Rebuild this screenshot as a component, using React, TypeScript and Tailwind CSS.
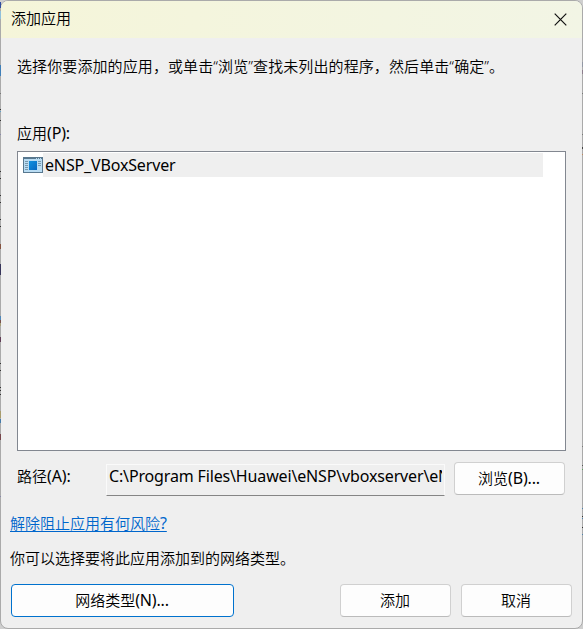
import React from 'react';

interface DialogButtonProps {
  label: string;
  suffix?: string;
  className: string;
  primary?: boolean;
}

// Bits of the desktop that show through the translucent window edge
const leftMarks = [
  { top: 2, height: 6, color: '#2f4ea0' },
  { top: 11, height: 8, color: '#8fc0dc' },
  { top: 65, height: 11, color: '#3f7fb8' },
  { top: 93, height: 1, color: '#777777' },
  { top: 109, height: 1, color: '#333333' },
  { top: 111, height: 1, color: '#5fa0c8' },
  { top: 120, height: 1, color: '#333333' },
  { top: 134, height: 1, color: '#8888aa' },
  { top: 171, height: 1, color: '#333333' },
  { top: 178, height: 1, color: '#333333' },
  { top: 195, height: 1, color: '#333333' },
  { top: 202, height: 1, color: '#333333' },
  { top: 219, height: 1, color: '#333333' },
  { top: 226, height: 1, color: '#333333' },
  { top: 244, height: 5, color: '#84523f' },
  { top: 264, height: 11, color: '#37355a' },
  { top: 316, height: 4, color: '#4f86b8' },
  { top: 320, height: 3, color: '#76504c' },
  { top: 323, height: 3, color: '#a59e78' },
  { top: 337, height: 5, color: '#603c55' },
  { top: 363, height: 1, color: '#333333' },
  { top: 370, height: 1, color: '#333333' },
  { top: 387, height: 1, color: '#333333' },
  { top: 390, height: 1, color: '#333333' },
  { top: 394, height: 1, color: '#333333' },
  { top: 411, height: 7, color: '#a89c6c' },
  { top: 419, height: 4, color: '#447baa' },
  { top: 434, height: 6, color: '#76464b' },
  { top: 496, height: 1, color: '#8888aa' },
];

const rightMarks = [
  { top: 62, height: 5, color: '#9297a4' },
  { top: 70, height: 4, color: '#8d7e8d' },
  { top: 93, height: 1, color: '#777777' },
  { top: 134, height: 1, color: '#777777' },
  { top: 147, height: 2, color: '#444444' },
  { top: 154, height: 1, color: '#c0885e' },
  { top: 446, height: 1, color: '#777777' },
  { top: 465, height: 1, color: '#555555' },
  { top: 469, height: 1, color: '#5a9a5a' },
  { top: 508, height: 1, color: '#4d82ad' },
  { top: 516, height: 1, color: '#333333' },
  { top: 518, height: 1, color: '#4d82ad' },
  { top: 527, height: 1, color: '#333333' },
  { top: 534, height: 1, color: '#4d82ad' },
];

// Latin letters need the regular weight to balance the lighter Chinese text
function Latin({ children }: { children: React.ReactNode }) {
  return <span className="text-[16px] leading-none font-normal tracking-[-0.15px]">{children}</span>;
}

function DialogButton({ label, suffix, className, primary = false }: DialogButtonProps) {
  const border = primary ? 'border-[#0072ce]' : 'border-[#d0d0d0] border-b-[#bbbbbb]';

  return (
    <button
      className={`h-[33px] shrink-0 rounded-[4px] border bg-[#fdfdfd] pr-px pb-[2px] ${border} ${className}`}
    >
      {label}
      {suffix && <Latin>{suffix}</Latin>}
    </button>
  );
}

function AppIcon() {
  return (
    <svg width="20" height="16" viewBox="0 0 20 16" shapeRendering="crispEdges" className="shrink-0">
      <defs>
        <linearGradient id="pane" x1="0" y1="0" x2="1" y2="1">
          <stop offset="0" stopColor="#1192e0" />
          <stop offset="1" stopColor="#0868c0" />
        </linearGradient>
      </defs>
      <rect width="20" height="16" fill="#58788f" />
      <rect x="1" y="2" width="18" height="13" fill="#b9dcf3" />
      <path d="M13 1h1v1h-1zM15 1h1v1h-1zM17 1h1v1h-1z" fill="#b9dcf3" />
      <rect x="6" y="4" width="8" height="9" fill="url(#pane)" />
      <path
        d="M2 4.5h3M2 6.5h3M2 8.5h3M2 10.5h3M2 12.5h3M15 4.5h3M15 6.5h3M15 8.5h3"
        stroke="#7898ac"
      />
    </svg>
  );
}

export default function App() {
  return (
    <div className="relative h-[629px] w-[583px] overflow-hidden bg-[#cfcfcf] font-['Noto_Sans','Noto_Sans_CJK_SC',sans-serif] text-[15px] leading-[22px] font-[350] text-black">
      <div className="flex h-full flex-col overflow-hidden rounded-[8px] border border-[#aaaaaa] bg-[#efefef]">
        <header className="flex h-[37px] shrink-0 items-center justify-between bg-linear-to-r from-[#f5f5d9] to-[#f2f5e5] pr-[15px] pl-[10px]">
          <h1 className="pb-[3px] font-[350]">添加应用</h1>
          <button aria-label="关闭">
            <svg width="13" height="13" viewBox="0 0 13 13" fill="none" stroke="#111" strokeWidth="1.2">
              <path d="M.7.7l11.6 11.6M12.3.7L.7 12.3" />
            </svg>
          </button>
        </header>

        <main className="px-4">
          <p className="mt-[17px] tracking-[0.1px] whitespace-nowrap">
            选择你要添加的应用，或单击“浏览”查找未列出的程序，然后单击“确定”。
          </p>
          <p className="mt-[45px] h-[22px]">
            应用<Latin>(P):</Latin>
          </p>

          <div className="mt-[7px] h-[300px] w-[549px] border border-[#828790] bg-white pt-px pl-[5px]">
            <div className="flex h-6 items-center">
              <AppIcon />
              <span className="flex h-6 w-[500px] items-center bg-[#efefef] pl-[2px]">
                <Latin>eNSP_VBoxServer</Latin>
              </span>
            </div>
          </div>

          <div className="mt-[11px] flex">
            <span className="mt-[3px] w-[89px] shrink-0">
              路径<Latin>(A):</Latin>
            </span>
            <div className="mt-[2px] h-8 w-[339px] border border-[#fafafa] border-b-[#858585] pr-[2px] pl-[2px]">
              <div className="h-[24px] overflow-hidden whitespace-nowrap">
                <Latin>C:\Program Files\Huawei\eNSP\vboxserver\eN</Latin>
              </div>
            </div>
            <DialogButton label="浏览" suffix="(B)..." className="ml-[9px] w-[111px]" />
          </div>
        </main>

        <footer className="px-[9px]">
          <a href="#" className="mt-[16px] block h-[22px] w-fit text-[#0066cc] underline underline-offset-2">
            解除阻止应用有何风险<Latin>?</Latin>
          </a>
          <p className="mt-[13px]">你可以选择要将此应用添加到的网络类型。</p>
          <div className="mt-[15px] flex pl-px">
            <DialogButton label="网络类型" suffix="(N)..." className="w-[223px]" primary />
            <DialogButton label="添加" className="ml-[106px] w-[111px]" />
            <DialogButton label="取消" className="ml-[10px] w-[111px]" />
          </div>
        </footer>
      </div>

      {leftMarks.map((m) => (
        <span key={m.top} className="absolute left-0 w-px" style={{ top: m.top, height: m.height, background: m.color }} />
      ))}
      {rightMarks.map((m) => (
        <span key={m.top} className="absolute right-0 w-px" style={{ top: m.top, height: m.height, background: m.color }} />
      ))}
    </div>
  );
}
